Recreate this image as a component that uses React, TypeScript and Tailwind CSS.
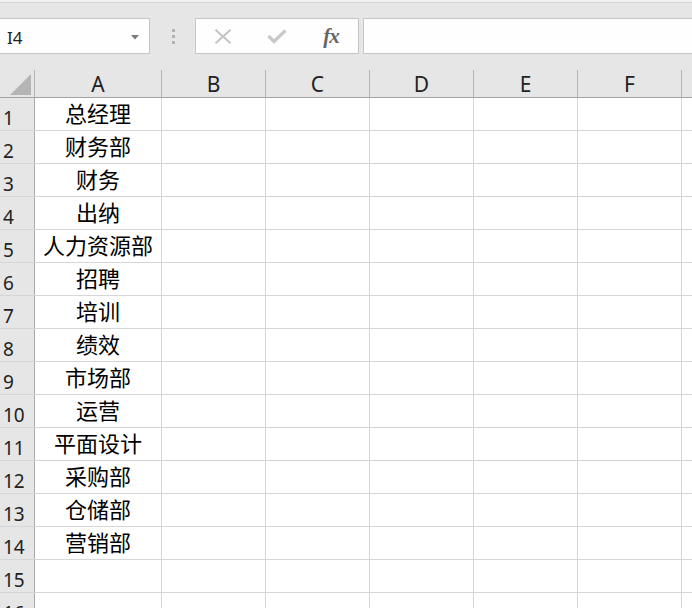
import React from "react";

const rows: string[] = [
  "总经理",
  "财务部",
  "财务",
  "出纳",
  "人力资源部",
  "招聘",
  "培训",
  "绩效",
  "市场部",
  "运营",
  "平面设计",
  "采购部",
  "仓储部",
  "营销部",
  "",
  "",
];

const cols: { label: string; w: string }[] = [
  { label: "B", w: "w-[104px]" },
  { label: "C", w: "w-[104px]" },
  { label: "D", w: "w-[104px]" },
  { label: "E", w: "w-[104px]" },
  { label: "F", w: "w-[104px]" },
  { label: "", w: "w-[104px]" },
];

const FONT = { fontFamily: '"Noto Sans", "Noto Sans CJK SC", sans-serif' };
const CJK = { fontFamily: '"Noto Sans CJK SC", "Noto Sans", sans-serif' };

export default function App() {
  return (
    <div className="w-[692px] h-[608px] overflow-hidden bg-[#e6e6e6] flex flex-col" style={FONT}>
      {/* top strip */}
      <div className="h-[3px] shrink-0 bg-[#f1f1f1] border-b border-[#d4d4d4]" />

      {/* toolbar */}
      <div className="flex items-stretch h-[36px] mt-[15px] shrink-0">
        <div className="w-[151px] -ml-[1px] shrink-0 bg-[#fefefe] border border-[#c6c6c6] flex items-center justify-between pl-[7px] pr-[10px]">
          <span className="text-[17px] leading-none pt-[3px] text-[#222]">I4</span>
          <svg width="8" height="5" viewBox="0 0 8 5" className="mt-[2px]">
            <path d="M0 0 H8 L4 4.5 Z" fill="#7a7a7a" />
          </svg>
        </div>
        <div className="w-[45px] shrink-0 flex flex-col items-center justify-center gap-[3px] pl-[2px]">
          <div className="w-[3px] h-[3px] bg-[#b2b2b2]" />
          <div className="w-[3px] h-[3px] bg-[#b2b2b2]" />
          <div className="w-[3px] h-[3px] bg-[#b2b2b2]" />
        </div>
        <div className="w-[164px] shrink-0 bg-[#fefefe] border border-[#c6c6c6] flex items-center">
          <div className="w-[54px] flex justify-center">
            <svg width="18" height="15" viewBox="0 0 18 15">
              <path d="M1.5 0.8 L16.5 14.2 M16.5 0.8 L1.5 14.2" stroke="#c4c4c4" strokeWidth="2" />
            </svg>
          </div>
          <div className="w-[54px] flex justify-center">
            <svg width="20" height="15" viewBox="0 0 20 15">
              <path d="M1.5 7 L7 12.5 L18.5 1.5" stroke="#c8c8c8" strokeWidth="3.2" fill="none" />
            </svg>
          </div>
          <div className="w-[54px] flex justify-center">
            <span
              className="text-[21px] leading-none italic font-bold text-[#666] tracking-[-1px]"
              style={{ fontFamily: '"Liberation Serif", "DejaVu Serif", serif' }}
            >
              fx
            </span>
          </div>
        </div>
        <div className="w-[340px] shrink-0 ml-[4px] bg-[#fefefe] border border-[#c6c6c6] border-r-0" />
      </div>

      {/* sheet */}
      <div className="mt-[16px] flex flex-col">
        {/* header row */}
        <div className="flex h-[28px] border-b border-[#a3a3a3] shrink-0">
          <div className="w-[35px] shrink-0 border-r border-[#b4b4b4] flex items-end justify-end pr-[3px] pb-[2px]">
            <svg width="21" height="21" viewBox="0 0 21 21">
              <path d="M21 0 V21 H0 Z" fill="#b5b5b5" />
            </svg>
          </div>
          <div className="w-[127px] shrink-0 border-r border-[#b4b4b4] flex items-end justify-center pb-[2px]">
            <span className="text-[21px] leading-none text-[#222]">A</span>
          </div>
          {cols.map((c, i) => (
            <div
              key={i}
              className={`${c.w} shrink-0 border-r border-[#b4b4b4] flex items-end justify-center pb-[2px]`}
            >
              <span className="text-[21px] leading-none text-[#222]">{c.label}</span>
            </div>
          ))}
        </div>

        {rows.map((r, i) => (
          <div key={i} className="flex h-[33px] shrink-0 bg-white border-b border-[#d6d6d6]">
            <div className="w-[35px] shrink-0 bg-[#e6e6e6] border-r border-[#a8a8a8] flex items-end pl-[3px] pb-[2px]">
              <span className="text-[19px] leading-none text-[#222]">{i + 1}</span>
            </div>
            <div className="w-[127px] shrink-0 border-r border-[#d6d6d6] flex items-center justify-center pb-[4px]">
              <span className="text-[22px] leading-none text-black" style={CJK}>
                {r}
              </span>
            </div>
            {cols.map((c, j) => (
              <div key={j} className={`${c.w} shrink-0 border-r border-[#d6d6d6]`} />
            ))}
          </div>
        ))}
      </div>
    </div>
  );
}
